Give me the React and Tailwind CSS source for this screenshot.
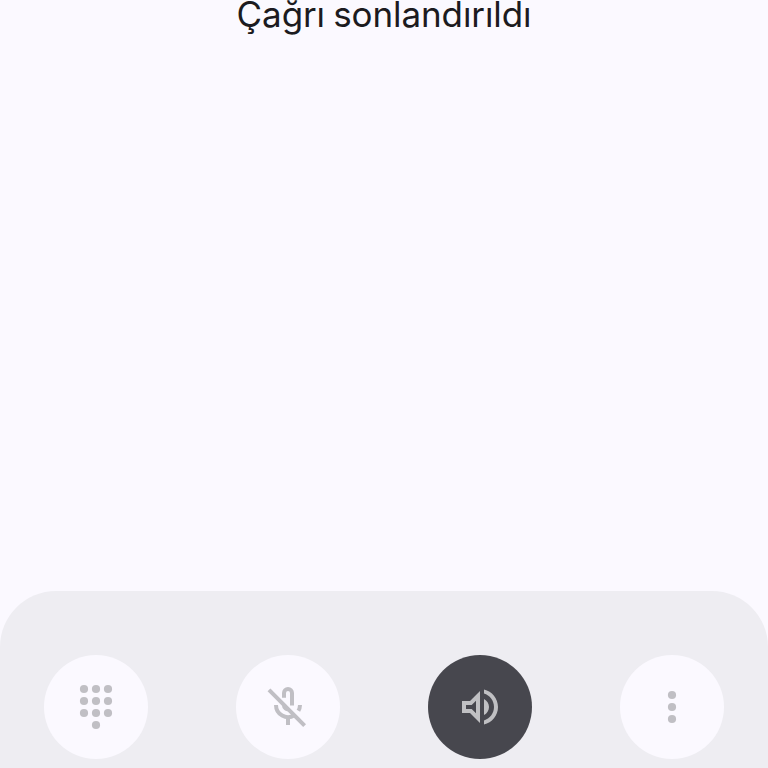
const controls = [
    { id: "keypad", label: "Tuş takımı", icon: <KeypadIcon /> },
    { id: "mute", label: "Sesi kapat", icon: <MicOffIcon /> },
    { id: "speaker", label: "Hoparlör", icon: <SpeakerIcon />, active: true },
    { id: "more", label: "Diğer", icon: <MoreIcon /> },
];

export default function App() {
    return (
        <div className="flex h-screen flex-col justify-between overflow-hidden bg-[#fbf9ff]">
            <h1 className="h-[39px] text-center font-['Inter',sans-serif] text-[35px] leading-[29px] font-normal tracking-[-0.1px] [word-spacing:-1.5px] text-[#1c1b20]">
                Çağrı sonlandırıldı
            </h1>

            {/* Panel de controles de la llamada */}
            <div className="grid h-[177px] grid-cols-4 justify-items-center rounded-t-[56px] bg-[#eeedf2] pt-16">
                {controls.map((item) => (
                    <CallButton key={item.id} {...item} />
                ))}
            </div>
        </div>
    );
}

function CallButton({ label, icon, active }) {
    return (
        <button
            aria-label={label}
            className={`flex size-[104px] items-center justify-center rounded-full ${
                active ? "bg-[#47474e] text-[#c0c0c3]" : "bg-[#fbf9ff] text-[#c0bfc4]"
            }`}
        >
            {icon}
        </button>
    );
}

function KeypadIcon() {
    return (
        <svg viewBox="0 0 24 24" className="size-12" fill="currentColor">
            {[3, 9, 15].map((y) =>
                [6, 12, 18].map((x) => <circle key={`${x}-${y}`} cx={x} cy={y} r="2.05" />)
            )}
            <circle cx="12" cy="21" r="2.05" />
        </svg>
    );
}

function MicOffIcon() {
    return (
        <svg viewBox="0 0 24 24" className="size-12" fill="none" stroke="currentColor" strokeWidth="2">
            <path d="M10 7.4V5a2 2 0 0 1 4 0v6.3" />
            <path d="M10 11a2 2 0 0 0 2.6 2" />
            <path d="M6 11a6 6 0 0 0 9.2 5.1M12 17v4" />
            <path d="M18 11a6 6 0 0 1-.8 2.9" />
            <path d="M2.5 3.4 20.3 21.3" />
        </svg>
    );
}

function SpeakerIcon() {
    return (
        <svg viewBox="0 0 24 24" className="size-12" fill="currentColor">
            <path d="M3 9v6h4l5 5V4L7 9H3zm7-.17v6.34L7.83 13H5v-2h2.83L10 8.83zM16.5 12c0-1.77-1.02-3.29-2.5-4.03v8.05c1.48-.73 2.5-2.25 2.5-4.02zM14 3.23v2.06c2.89.86 5 3.54 5 6.71s-2.11 5.85-5 6.71v2.06c4.01-.91 7-4.49 7-8.77s-2.99-7.86-7-8.77z" />
        </svg>
    );
}

function MoreIcon() {
    return (
        <svg viewBox="0 0 24 24" className="size-12" fill="currentColor">
            <circle cx="12" cy="6" r="2.05" />
            <circle cx="12" cy="12" r="2.05" />
            <circle cx="12" cy="18" r="2.05" />
        </svg>
    );
}
